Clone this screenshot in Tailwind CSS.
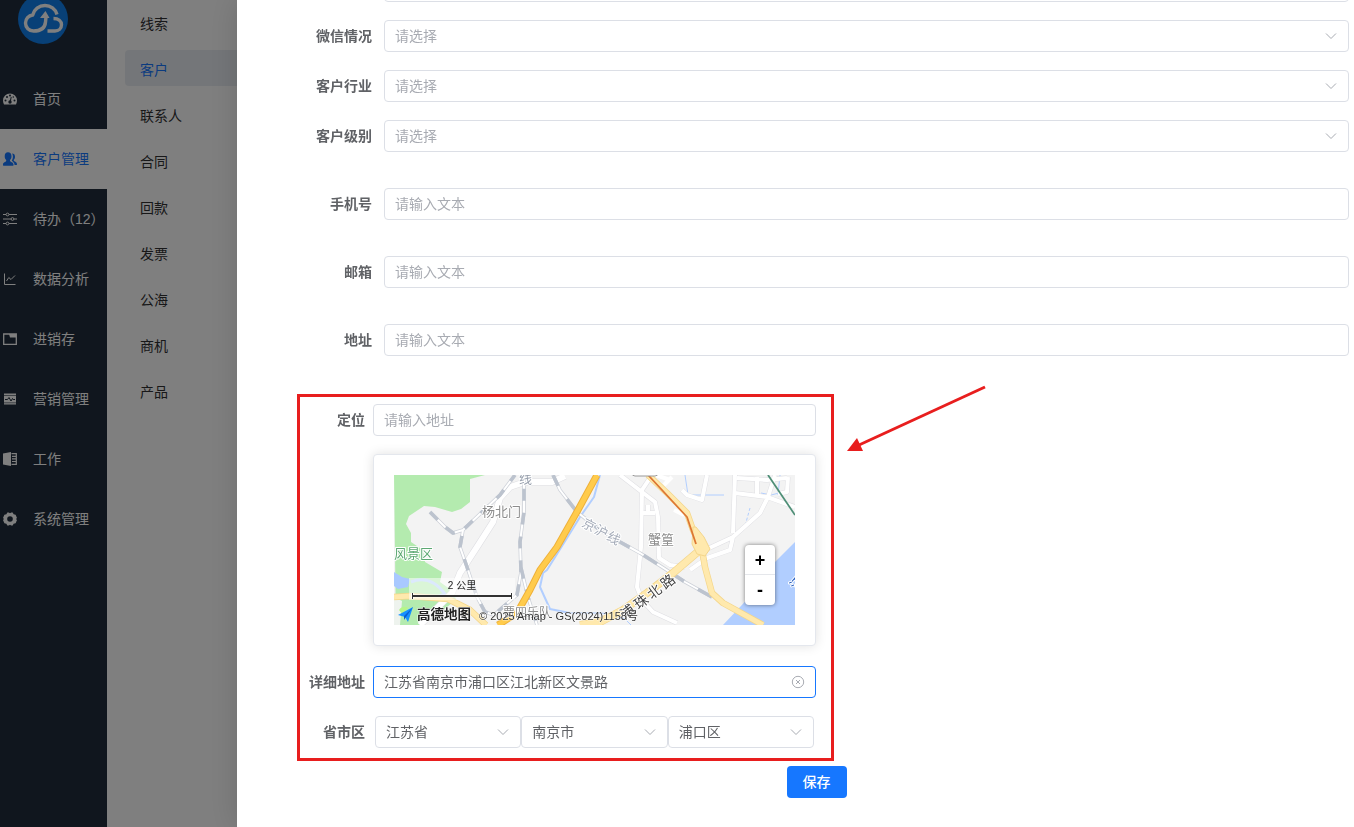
<!DOCTYPE html>
<html lang="zh-CN">
  <head>
    <meta charset="UTF-8" />
    <meta name="viewport" content="width=device-width, initial-scale=1.0" />
    <title>客户管理</title>
    <script src="https://cdn.jsdelivr.net/npm/@tailwindcss/browser@4"></script>
  </head>
  <body
    class="h-screen overflow-hidden bg-white text-sm text-[#303133] font-['Liberation_Sans','Noto_Sans_CJK_SC',sans-serif]"
  >
    <div class="flex h-full">
      <!-- Main menu -->
      <aside class="w-[107px] shrink-0 bg-[#202d3c] text-white">
        <div class="flex h-[69px] items-start pl-[18px]">
          <svg class="-mt-1.5 size-[50px]" viewBox="0 0 50 50" fill="none">
            <circle cx="25" cy="25" r="25" fill="#1080ee" />
            <g stroke="#fff" stroke-width="3.4" stroke-linejoin="round">
              <path d="M39 20.500c-1.500-5.500-6.500-9-12-9-6 0-11 4-12.300 9.500C10.500 21.500 7.500 25 7.500 29c0 4.500 3.500 8 8 8 7 0 11.500-3 12-9l.500-5" />
              <path d="M35.500 24.500c5 0 8 2.500 8 6.300s-3 6.200-6.500 6.200h-7.500" />
            </g>
            <path d="M27.500 17l-5.500 7h9.500z" fill="#fff" />
          </svg>
        </div>
        <nav>
          <a href="#" class="flex h-15 items-center gap-4 pl-[3px] whitespace-nowrap">
            <svg class="size-3.5 shrink-0" viewBox="0 0 14 14">
              <path d="M7 1.500a7 7 0 0 0-7 7c0 1.500.400 2.800 1 4h12c.600-1.200 1-2.500 1-4a7 7 0 0 0-7-7z" fill="#fff" />
              <g fill="#202d3c">
                <circle cx="2.500" cy="8.500" r="1" />
                <circle cx="4" cy="5" r="1" />
                <circle cx="7" cy="3.500" r="1" />
                <circle cx="11.500" cy="8.500" r="1" />
                <circle cx="10.300" cy="5" r=".8" />
                <circle cx="7" cy="10" r="1.700" />
                <path d="M6.500 10l1.300-5.200.9.200L7.700 10z" />
              </g>
            </svg>
            首页
          </a>
          <a href="#" class="flex h-15 items-center gap-4 pl-[3px] whitespace-nowrap bg-white text-[#1677ff]">
            <svg class="size-3.5 shrink-0" viewBox="0 0 14 14" fill="#1677ff">
              <path d="M5 .300c2.200 0 3.500 1.600 3.500 4C8.500 6 8 7.200 7 8v1c.300.900 3.300 1.200 3.500 3.500.100.700 0 1.200-.400 1.200H.400C0 13.700 0 13 0 12.500 0 10.200 2.800 10 3.200 9V8c-1-.800-1.500-2-1.500-3.700 0-2.400 1.200-4 3.300-4z" />
              <path d="M9 1.500c2 0 3 1.200 3 3.300 0 1.300-.400 2.300-1.200 3v1c.300.800 3 .900 3.200 3.200 0 .600 0 .900-.400.900h-2C11.500 10.500 9.500 9.500 8.700 8.500c.800-1 1.200-2.300 1.200-4 0-1.200-.300-2.200-.9-3z" />
            </svg>
            客户管理
          </a>
          <a href="#" class="flex h-15 items-center gap-4 pl-[3px] whitespace-nowrap">
            <svg class="size-3.5 shrink-0" viewBox="0 0 14 14" fill="none" stroke="#fff">
              <path d="M0 2.500h3M6 2.500h8M0 7h8M11 7h3M0 11.500h3M6 11.500h8" />
              <circle cx="4.500" cy="2.500" r="1.400" />
              <circle cx="9.500" cy="7" r="1.400" />
              <circle cx="4.500" cy="11.500" r="1.400" />
            </svg>
            待办（12）
          </a>
          <a href="#" class="flex h-15 items-center gap-4 pl-[3px] whitespace-nowrap">
            <svg class="size-3.5 shrink-0" viewBox="0 0 14 14" fill="none" stroke="#fff">
              <path d="M1.500 1.500v11h11M3.500 9l2.300-3.500L8 7.500l4-4" />
            </svg>
            数据分析
          </a>
          <a href="#" class="flex h-15 items-center gap-4 pl-[3px] whitespace-nowrap">
            <svg class="size-3.5 shrink-0" viewBox="0 0 14 14">
              <path d="M.7 2h12.600v10.300H.7z" fill="none" stroke="#fff" stroke-width="1.300" />
              <path d="M6 2h7v3.500H7z" fill="#fff" />
            </svg>
            进销存
          </a>
          <a href="#" class="flex h-15 items-center gap-4 pl-[3px] whitespace-nowrap">
            <svg class="size-3.5 shrink-0" viewBox="0 0 14 14">
              <path d="M1 1.500h12v11H1z" fill="#fff" />
              <path d="M1 3.500h12M1 10.800h12" stroke="#202d3c" stroke-width=".6" />
              <path d="M2 7.500h2.500l1.500-2 2 3.500 1.500-2.500.700 1H12" fill="none" stroke="#202d3c" />
            </svg>
            营销管理
          </a>
          <a href="#" class="flex h-15 items-center gap-4 pl-[3px] whitespace-nowrap">
            <svg class="size-3.5 shrink-0" viewBox="0 0 14 14">
              <path d="M0 1.500L8 0v14l-8-1.500z" fill="#fff" />
              <path d="M8.500 1.700h4.800v10.600H8.500M9 4.300h4M9 6.900h4M9 9.500h4" fill="none" stroke="#fff" stroke-width="1.200" />
            </svg>
            工作
          </a>
          <a href="#" class="flex h-15 items-center gap-4 pl-[3px] whitespace-nowrap">
            <svg class="size-3.5 shrink-0" viewBox="0 0 14 14">
              <path d="M4.300.500h1.500L7 1.200 8.200.500h1.500l.900 1.700 2 .500 1.400 3.300-1 1 1 1-1.400 3.300-2 .500-.9 1.700H8.200L7 12.800l-1.200.700H4.300l-.9-1.700-2-.5L0 8l1-1-1-1 1.400-3.300 2-.5z" fill="#fff" />
              <circle cx="7" cy="7" r="2.800" fill="#202d3c" />
            </svg>
            系统管理
          </a>
        </nav>
      </aside>

      <!-- Sub menu -->
      <nav class="w-60 shrink-0 bg-white pt-1 pl-[18px] space-y-2.5">
        <a href="#" class="block h-9 rounded pl-[15px] leading-10">线索</a>
        <a href="#" class="block h-9 rounded pl-[15px] leading-10 bg-[#e9edf2] text-[#1677ff]">客户</a>
        <a href="#" class="block h-9 rounded pl-[15px] leading-10">联系人</a>
        <a href="#" class="block h-9 rounded pl-[15px] leading-10">合同</a>
        <a href="#" class="block h-9 rounded pl-[15px] leading-10">回款</a>
        <a href="#" class="block h-9 rounded pl-[15px] leading-10">发票</a>
        <a href="#" class="block h-9 rounded pl-[15px] leading-10">公海</a>
        <a href="#" class="block h-9 rounded pl-[15px] leading-10">商机</a>
        <a href="#" class="block h-9 rounded pl-[15px] leading-10">产品</a>
      </nav>
    </div>

    <!-- Drawer -->
    <div class="fixed inset-0 flex bg-black/50">
      <div class="ml-[237px] flex-1 overflow-hidden bg-white shadow-[0_0_30px_rgba(0,0,0,0.14)]">
        <form class="-mt-[30px] mr-[5px] ml-[47px] text-[#606266]">
          <div class="mb-[18px] flex h-8 pl-[100px]">
            <select aria-label="客户来源" class="w-full appearance-none rounded border border-[#dcdfe6]"></select>
          </div>
          <div class="mb-[18px] flex h-8 items-center">
            <label for="wechat" class="w-[100px] shrink-0 pr-3 text-right font-bold">微信情况</label>
            <div class="relative flex-1">
              <select id="wechat" class="h-8 w-full appearance-none rounded border border-[#dcdfe6] bg-white px-2.5 text-[#a8abb2]">
                <option>请选择</option>
              </select>
              <svg class="pointer-events-none absolute top-2.5 right-3 size-3" viewBox="0 0 12 12" fill="none" stroke="#a8abb2"><path d="M1 3.500l5 5 5-5" /></svg>
            </div>
          </div>
          <div class="mb-[18px] flex h-8 items-center">
            <label for="industry" class="w-[100px] shrink-0 pr-3 text-right font-bold">客户行业</label>
            <div class="relative flex-1">
              <select id="industry" class="h-8 w-full appearance-none rounded border border-[#dcdfe6] bg-white px-2.5 text-[#a8abb2]">
                <option>请选择</option>
              </select>
              <svg class="pointer-events-none absolute top-2.5 right-3 size-3" viewBox="0 0 12 12" fill="none" stroke="#a8abb2"><path d="M1 3.500l5 5 5-5" /></svg>
            </div>
          </div>
          <div class="mb-9 flex h-8 items-center">
            <label for="level" class="w-[100px] shrink-0 pr-3 text-right font-bold">客户级别</label>
            <div class="relative flex-1">
              <select id="level" class="h-8 w-full appearance-none rounded border border-[#dcdfe6] bg-white px-2.5 text-[#a8abb2]">
                <option>请选择</option>
              </select>
              <svg class="pointer-events-none absolute top-2.5 right-3 size-3" viewBox="0 0 12 12" fill="none" stroke="#a8abb2"><path d="M1 3.500l5 5 5-5" /></svg>
            </div>
          </div>
          <div class="mb-9 flex h-8 items-center">
            <label for="phone" class="w-[100px] shrink-0 pr-3 text-right font-bold">手机号</label>
            <input id="phone" type="text" class="h-8 min-w-0 flex-1 rounded border border-[#dcdfe6] px-2.5 placeholder:text-[#a8abb2]" placeholder="请输入文本" />
          </div>
          <div class="mb-9 flex h-8 items-center">
            <label for="email" class="w-[100px] shrink-0 pr-3 text-right font-bold">邮箱</label>
            <input id="email" type="text" class="h-8 min-w-0 flex-1 rounded border border-[#dcdfe6] px-2.5 placeholder:text-[#a8abb2]" placeholder="请输入文本" />
          </div>
          <div class="mb-9 flex h-8 items-center">
            <label for="address" class="w-[100px] shrink-0 pr-3 text-right font-bold">地址</label>
            <input id="address" type="text" class="h-8 min-w-0 flex-1 rounded border border-[#dcdfe6] px-2.5 placeholder:text-[#a8abb2]" placeholder="请输入文本" />
          </div>

          <!-- Location -->
          <section class="relative mt-[38px] ml-[13px] w-[537px] border-3 border-[#e81e1e] pt-[7px] pr-[15px] pb-2.5">
            <div class="mb-[18px] flex h-8 items-center">
              <label for="location" class="w-[73px] shrink-0 pr-2 text-right font-bold">定位</label>
              <input id="location" type="text" class="h-8 min-w-0 flex-1 rounded border border-[#dcdfe6] px-2.5 placeholder:text-[#a8abb2]" placeholder="请输入地址" />
            </div>

            <div class="mb-5 ml-[73px] rounded border border-[#e4e7ed] bg-white p-5 shadow-[0_0_12px_rgba(0,0,0,0.12)]">
              <div class="relative">
                <svg class="block h-[150px] w-full" viewBox="0 0 401 150" fill="none" stroke-linejoin="round">
                  <rect width="401" height="150" fill="#f3f3f3" />
                  <!-- parks and water -->
                  <path d="M0 0h91L76 4v23l-9 7-9 3-17-5-11-1-15 10-3 8 5 9v9l12 8 2 12 17 10-2 10 14 10 2 8-18 14-20 13-22 4z" fill="#b4ebaf" />
                  <path d="M0 122l8 4-2 24H0z" fill="#eef3ee" />
                  <path d="M0 97l8 5 8 2-2 8-10 2-4-3z" fill="#a9c9ff" />
                  <path d="M17 107c10-4 22-4 34 12l-8 3" stroke="#b9d2fb" stroke-width="3" />
                  <path d="M401 67l-20 20-22 31-13 14-17 18h72z" fill="#b1ceff" />
                  <g stroke="#b1ceff">
                    <path d="M206 0l-6 22-14 20-13 21-20 32-4 3-3 14 10 22 20 4" stroke-width="2" />
                    <path d="M176 138h30l10 1 15 5 6 6M291 0l3 20h36M367 18l10 2 8-2M386 0l-2 20" />
                    <path d="M356 33l-5 18" stroke-dasharray="3 2" />
                  </g>
                  <!-- minor roads -->
                  <g stroke="#dfdfe3" stroke-width="5">
                    <path d="M226 0l22 17 13 10 3 15 1 41 11 7 15 2M256 3l-8 12-1 57-4 40 5 13 11 12 24 11M249 38h12M254 30v8M288 15l5 5 15 5 5-25M341 0l-2 58M341 18l32 4 28 10M311 75l28-13 27-24 8-16 7-22M343 3l30 2 20-2M363 2v18M384 19l9-2 1-15M296 95l17-12 23-8 3-13" />
                    <path d="M171 1l-13 6h-27l-15 5-10 11-7 24-16 25-17 26-8 20-32 32" stroke-width="7" />
                  </g>
                  <g stroke="#fff" stroke-width="4">
                    <path d="M226 0l22 17 13 10 3 15 1 41 11 7 15 2M256 3l-8 12-1 57-4 40 5 13 11 12 24 11M249 38h12M254 30v8M288 15l5 5 15 5 5-25M341 0l-2 58M341 18l32 4 28 10M311 75l28-13 27-24 8-16 7-22M343 3l30 2 20-2M363 2v18M384 19l9-2 1-15M296 95l17-12 23-8 3-13M262 0l14 5M270 10l8-8M280 35l10 5" />
                    <path d="M171 1l-13 6h-27l-15 5-10 11-7 24-16 25-17 26-8 20-32 32" stroke-width="6" />
                  </g>
                  <!-- railways -->
                  <g stroke="#cdd1d8" stroke-width="3.500">
                    <path d="M36 37l15 15 8 6 10-3 37-35 15-20M69 55l-3 17 7 20 10 30 8 15 9 3 9-8 14-12 4-23-1-30 4-30V0M127 93l7 29 9 28M159 0l7 15 17 22 23 18 20 12 20 11 22 14 23 15 27 15" />
                  </g>
                  <g stroke="#fff" stroke-width="2">
                    <path d="M36 37l15 15 8 6 10-3 37-35 15-20M69 55l-3 17 7 20 10 30 8 15 9 3 9-8 14-12 4-23-1-30 4-30V0M127 93l7 29 9 28M159 0l7 15 17 22 23 18 20 12 20 11 22 14 23 15 27 15" />
                  </g>
                  <g stroke="#bcc3ce" stroke-width="3.500">
                    <path d="M36 37l15 15 8 6 10-3 37-35 15-20M127 93l7 29 9 28" stroke-dasharray="11 11" />
                    <path d="M69 55l-3 17 7 20 10 30 8 15 9 3 9-8 14-12 4-23-1-30 4-30V0" stroke-dasharray="12 12" stroke-dashoffset="-6" />
                    <path d="M159 0l7 15 17 22 23 18 20 12 20 11 22 14 23 15 27 15" stroke-dasharray="16 16" stroke-dashoffset="4" />
                  </g>
                  <!-- main roads -->
                  <g stroke="#f4d68b" stroke-width="6.500">
                    <path d="M0 122l16-1 38 3 22 11 16 15" />
                    <path d="M186 150l20-3 23-12 24-17 26-20 27-23" stroke-width="8" />
                    <path d="M254 0l19 18 20 20 6 17 9 20 3 17 7 26 11 10 40 22" />
                  </g>
                  <g stroke="#ffe9ad" stroke-width="5">
                    <path d="M0 122l16-1 38 3 22 11 16 15" />
                    <path d="M186 150l20-3 23-12 24-17 26-20 27-23" stroke-width="6.500" />
                    <path d="M254 0l19 18 20 20 6 17 9 20 3 17 7 26 11 10 40 22" />
                  </g>
                  <path d="M299 52l-1 17 5 10 8 2 5-7-6-12-8-10z" fill="#ffe9ad" stroke="#f4d68b" />
                  <path d="M203 0l-19 35-21 37-17 23-10 20-13 23-19 12" stroke="#eeb03a" stroke-width="7" />
                  <path d="M203 0l-19 35-21 37-17 23-10 20-13 23-19 12" stroke="#ffcb4c" stroke-width="5" />
                  <path d="M254 0l39 42 9 27" stroke="#dd7733" stroke-width="1.800" />
                  <path d="M374 0l27 40" stroke="#4f8f77" stroke-width="1.800" />
                  <rect x="238" y="-7" width="26" height="8" rx="3" fill="#fff" stroke="#999" />
                  <!-- place names -->
                  <g stroke="#fff" stroke-width="2" paint-order="stroke" font-size="13">
                    <text x="125" y="8" fill="#98a0ad">线</text>
                    <text x="88" y="41" fill="#8c8c8c">杨北门</text>
                    <text x="0" y="83" fill="#5ca873">风景区</text>
                    <text x="254" y="69" fill="#8c8c8c">蟹篁</text>
                    <text x="109" y="142" fill="#8c8c8c" font-size="12">贾四乐队</text>
                    <text transform="translate(187 51) rotate(28)" fill="#a4abb8">京&#8202;沪&#8202;线</text>
                    <text transform="translate(231 145) rotate(-37)" fill="#444" font-size="14">浦&#8201;珠&#8201;北&#8201;路</text>
                    <text transform="translate(402 116) rotate(-50)" fill="#2860c0">江</text>
                  </g>
                  <!-- scale -->
                  <rect x="15" y="103" width="106" height="22" fill="#fff" fill-opacity=".5" />
                  <text x="68" y="114" fill="#222" font-size="10" text-anchor="middle">2 公里</text>
                  <path d="M18 121h100M18.500 118v6M117.500 118v6" stroke="#fff" stroke-width="3" stroke-opacity=".8" />
                  <path d="M18 121h100" stroke="#333" stroke-width="2" />
                  <path d="M18.500 118v6M117.500 118v6" stroke="#333" />
                  <!-- provider -->
                  <path d="M5 135c2-4 8-4 9-2l-6 6z" fill="#b6f58a" />
                  <path d="M4 140l15-8-5 15-3-5z" fill="#1591ff" />
                  <path d="M19 132l-9 9v4l2-3z" fill="#0a5fd0" />
                  <text x="23" y="144" fill="#222" stroke="#fff" stroke-width="1" paint-order="stroke" font-size="13.500" font-weight="700">高德地图</text>
                  <text x="85" y="145" fill="#333" stroke="#fff" stroke-opacity=".6" paint-order="stroke" font-size="11">© 2025 Amap - GS(2024)1158号</text>
                </svg>
                <div class="absolute right-5 bottom-5 flex w-[30px] flex-col divide-y divide-gray-200 rounded bg-white text-lg leading-none font-bold text-black shadow-[0_0_4px_rgba(0,0,0,0.5)]">
                  <button type="button" class="h-[30px]">+</button>
                  <button type="button" class="h-[30px]">-</button>
                </div>
              </div>
            </div>

            <div class="mb-[18px] flex h-8 items-center">
              <label for="detail" class="w-[73px] shrink-0 pr-2 text-right font-bold">详细地址</label>
              <div class="flex h-8 min-w-0 flex-1 items-center rounded border border-[#1677ff] px-2.5">
                <input id="detail" type="text" class="min-w-0 flex-1 outline-0" value="江苏省南京市浦口区江北新区文景路" />
                <button type="button" aria-label="清空">
                  <svg class="size-3.5" viewBox="0 0 14 14" fill="none" stroke="#a8abb2"><circle cx="7" cy="7" r="5.700" /><path d="M5 5l4 4M9 5l-4 4" /></svg>
                </button>
              </div>
            </div>

            <div class="flex h-8 items-center">
              <label for="province" class="w-[73px] shrink-0 pr-2 text-right font-bold">省市区</label>
              <div class="grid flex-1 grid-cols-3 px-0.5">
                <div class="relative">
                  <select id="province" class="h-8 w-full appearance-none rounded border border-[#dcdfe6] bg-white px-2.5">
                    <option>江苏省</option>
                  </select>
                  <svg class="pointer-events-none absolute top-2.5 right-3 size-3" viewBox="0 0 12 12" fill="none" stroke="#a8abb2"><path d="M1 3.500l5 5 5-5" /></svg>
                </div>
                <div class="relative">
                  <select aria-label="市" class="h-8 w-full appearance-none rounded border border-[#dcdfe6] bg-white px-2.5">
                    <option>南京市</option>
                  </select>
                  <svg class="pointer-events-none absolute top-2.5 right-3 size-3" viewBox="0 0 12 12" fill="none" stroke="#a8abb2"><path d="M1 3.500l5 5 5-5" /></svg>
                </div>
                <div class="relative">
                  <select aria-label="区" class="h-8 w-full appearance-none rounded border border-[#dcdfe6] bg-white px-2.5">
                    <option>浦口区</option>
                  </select>
                  <svg class="pointer-events-none absolute top-2.5 right-3 size-3" viewBox="0 0 12 12" fill="none" stroke="#a8abb2"><path d="M1 3.500l5 5 5-5" /></svg>
                </div>
              </div>
            </div>

            <!-- arrow pointing at the section -->
            <svg class="pointer-events-none absolute -top-3 left-full ml-3.5 h-20 w-[145px]" viewBox="0 0 145 80">
              <path d="M140 2L14 60" stroke="#e81e1e" stroke-width="3" />
              <path d="M2 66l10-13 6 13z" fill="#e81e1e" />
            </svg>
          </section>

          <div class="mt-[5px] flex justify-center">
            <button type="submit" class="h-8 w-15 rounded bg-[#1677ff] font-medium text-white">保存</button>
          </div>
        </form>
      </div>
    </div>
  </body>
</html>
